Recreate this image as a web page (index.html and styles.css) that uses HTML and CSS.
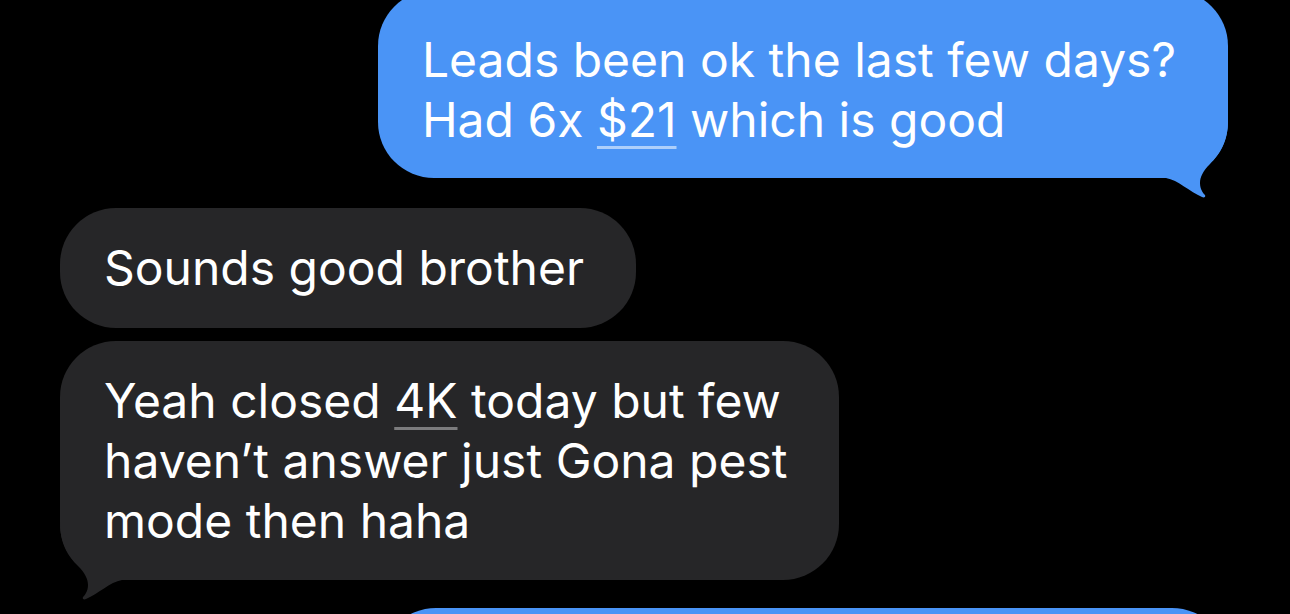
FILE: index.html
```html
<!DOCTYPE html>
<html lang="en">

<head>
    <meta charset="utf-8" />
    <title>Messages</title>
    <link rel="stylesheet" href="styles.css">
</head>

<body>

    <div class="thread">
        <div class="bubble sent first">
            <p>Leads been ok the last few days?<br>Had 6x <span class="detected">$21</span> which is good</p>
            <svg class="tail" viewBox="0 0 68 80" width="68" height="80">
                <path d="M0 0H68C68 22 60 34 50 44C43 51 40 57 40 63C40 69 43 73 45 75C46 77 44 78 42 77C30 72 18 60 6 58H0Z" />
            </svg>
        </div>

        <div class="bubble received">
            <p>Sounds good brother</p>
        </div>

        <div class="bubble received grouped">
            <p>Yeah closed <span class="detected">4K</span> today but few<br>haven’t answer just Gona pest<br>mode then haha</p>
            <svg class="tail" viewBox="0 0 68 80" width="68" height="80">
                <path d="M0 0H68C68 22 60 34 50 44C43 51 40 57 40 63C40 69 43 73 45 75C46 77 44 78 42 77C30 72 18 60 6 58H0Z" />
            </svg>
        </div>

        <div class="bubble sent last">
            <p>&nbsp;</p>
        </div>
    </div>

</body>

</html>
```

FILE: styles.css
```css
* {
    box-sizing: border-box;
}

body {
    margin: 0;
    height: 614px;
    overflow: hidden;
    background: #000;
}

.thread {
    display: flex;
    flex-direction: column;
    padding: 0 62px 0 60px;
}

.bubble {
    position: relative;
    border-radius: 56px;
    padding: 30px 52px 30px 44px;
    color: #fff;
    font-family: Inter, "Noto Sans", sans-serif;
    font-size: 48px;
    line-height: 60px;
}

.bubble p {
    position: relative;
    z-index: 1;
    margin: 0;
    white-space: nowrap;
}

.sent {
    align-self: flex-end;
    background: #4a94f6;
    fill: #4a94f6;
}

.received {
    align-self: flex-start;
    background: #262628;
    fill: #262628;
    margin-top: 30px;
}

.first {
    margin-top: -10px;
    padding-top: 40px;
    padding-bottom: 28px;
}

.grouped {
    margin-top: 13px;
    padding-bottom: 29px;
}

.last {
    margin-top: 28px;
    width: 848px;
}

.tail {
    position: absolute;
    right: 0;
    bottom: -22px;
}

.received .tail {
    right: auto;
    left: 0;
    transform: scaleX(-1);
}

.detected {
    text-decoration: underline;
    text-decoration-thickness: 3px;
    text-underline-offset: 9px;
}

.sent .detected {
    text-decoration-color: rgba(255, 255, 255, 0.55);
}

.received .detected {
    text-decoration-color: rgba(255, 255, 255, 0.4);
}
```
